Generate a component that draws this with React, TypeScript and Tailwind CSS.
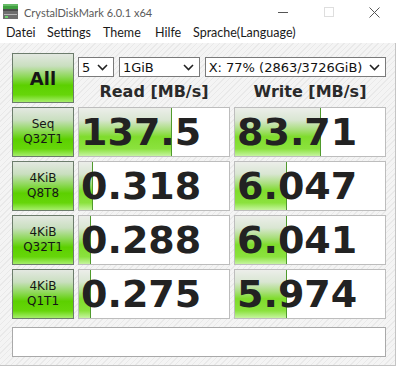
import React from 'react';

type Row = { l1: string; l2: string; read: string; rw: number; write: string; ww: number };

const rows: Row[] = [
  { l1: 'Seq', l2: 'Q32T1', read: '137.5', rw: 93, write: '83.71', ww: 86 },
  { l1: '4KiB', l2: 'Q8T8', read: '0.318', rw: 14, write: '6.047', ww: 52 },
  { l1: '4KiB', l2: 'Q32T1', read: '0.288', rw: 12, write: '6.041', ww: 52 },
  { l1: '4KiB', l2: 'Q1T1', read: '0.275', rw: 12, write: '5.974', ww: 52 },
];

const greenBtn =
  'border border-[#6c7c6c] bg-[linear-gradient(to_bottom,#e3e8e1_0%,#c9dfbf_25%,#8bd854_48%,#5cd000_65%,#66d60a_85%,#a6ee6c_100%)] text-[#161616]';

const Chevron = () => (
  <svg width="11" height="7" viewBox="0 0 11 7" className="shrink-0">
    <polyline points="1,1 5.5,5.5 10,1" fill="none" stroke="#222" strokeWidth="1.6" />
  </svg>
);

const Select: React.FC<{ value: string; width: string }> = ({ value, width }) => (
  <div className={`${width} h-[20px] bg-white border border-[#7a7a7a] flex items-center justify-between pl-[3px] pr-[5px] text-[13px] text-[#111] font-['DejaVu_Sans',sans-serif]`}>
    <span className="leading-none">{value}</span>
    <Chevron />
  </div>
);

const Cell: React.FC<{ value: string; bar: number }> = ({ value, bar }) => (
  <div className="relative h-[50px] bg-white border border-[#bdbdbd] flex items-center overflow-hidden">
    <div
      className="absolute left-0 top-0 bottom-0 border-r border-[#4f9a2c] bg-[linear-gradient(to_bottom,#eceeea_0%,#d9e6d2_25%,#a9df7c_45%,#7fdc2c_60%,#8be23e_85%,#c6f4a0_100%)]"
      style={{ width: bar }}
    />
    <span className="relative pl-[2px] text-[38px] leading-none font-bold text-[#222] font-['DejaVu_Sans',sans-serif]">
      {value}
    </span>
  </div>
);

export default function App() {
  return (
    <div className="w-[398px] h-[367px] bg-white overflow-hidden font-['Lato',sans-serif]">
      {/* title bar */}
      <div className="h-[24px] flex items-center">
        <svg width="15" height="15" viewBox="0 0 15 15" className="ml-[3px] mt-[-1px]">
          <rect x="0" y="0" width="15" height="5" fill="#3f9f3f" />
          <rect x="0" y="0" width="15" height="2" fill="#66bb66" />
          <rect x="0" y="5" width="15" height="10" fill="#6e6e6e" />
          <rect x="0" y="5" width="15" height="2" fill="#4c4c4c" />
          <rect x="1" y="10" width="13" height="1" fill="#b8b8b8" />
          <rect x="2" y="12" width="3" height="2" fill="#6fd36f" />
        </svg>
        <span className="ml-[6px] text-[11px] text-[#5a5a5a] leading-none">CrystalDiskMark 6.0.1 x64</span>
        <div className="ml-auto flex items-center h-full">
          <div className="w-[46px] h-full flex items-center justify-center">
            <div className="w-[10px] h-px bg-[#555]" />
          </div>
          <div className="w-[46px] h-full flex items-center justify-center">
            <div className="w-[10px] h-[10px] border border-[#dedede]" />
          </div>
          <div className="w-[46px] h-full flex items-center justify-center pr-[2px]">
            <svg width="11" height="11" viewBox="0 0 11 11">
              <path d="M0.5 0.5 L10.5 10.5 M10.5 0.5 L0.5 10.5" stroke="#555" strokeWidth="1" />
            </svg>
          </div>
        </div>
      </div>

      {/* menu bar */}
      <div className="h-[19px] flex items-center pl-[6px] text-[12.5px] text-[#1a1a1a] leading-none">
        <span className="w-[41px]">Datei</span>
        <span className="w-[56px]">Settings</span>
        <span className="w-[52px]">Theme</span>
        <span className="w-[38px]">Hilfe</span>
        <span>Sprache(Language)</span>
      </div>

      {/* body */}
      <div className="w-[396px] h-[323px] border-r border-b border-[#c4c4c4] bg-[#f3f3f3] bg-[repeating-linear-gradient(135deg,#f4f4f4_0px,#f4f4f4_3px,#e9e9e9_3px,#e9e9e9_4px)] pl-[12px] pt-[10px]">
        <div className="grid grid-cols-[62px_152px_152px] gap-x-[4px] gap-y-[4px]">
          <div className={`${greenBtn} h-[50px] flex items-center justify-center font-['DejaVu_Sans',sans-serif] font-bold text-[18px]`}>
            All
          </div>
          <div className="col-span-2 flex flex-col">
            <div className="flex gap-[5px] mt-[4px]">
              <Select value="5" width="w-[36px]" />
              <Select value="1GiB" width="w-[81px]" />
              <Select value="X: 77% (2863/3726GiB)" width="w-[182px]" />
            </div>
            <div className="grid grid-cols-[152px_152px] gap-x-[4px] mt-[5px] font-['DejaVu_Sans',sans-serif] font-bold text-[16px] leading-[20px] text-[#2a2a2a]">
              <div className="text-center">Read [MB/s]</div>
              <div className="text-center">Write [MB/s]</div>
            </div>
          </div>

          {rows.map((r, i) => (
            <React.Fragment key={i}>
              <div className={`${greenBtn} h-[50px] flex flex-col items-center justify-center font-['DejaVu_Sans',sans-serif] text-[12px] leading-[15px]`}>
                <span>{r.l1}</span>
                <span>{r.l2}</span>
              </div>
              <Cell value={r.read} bar={r.rw} />
              <Cell value={r.write} bar={r.ww} />
            </React.Fragment>
          ))}
        </div>
        <div className="mt-[8px] w-[374px] h-[30px] bg-white border border-[#a9a9a9]" />
      </div>
    </div>
  );
}
